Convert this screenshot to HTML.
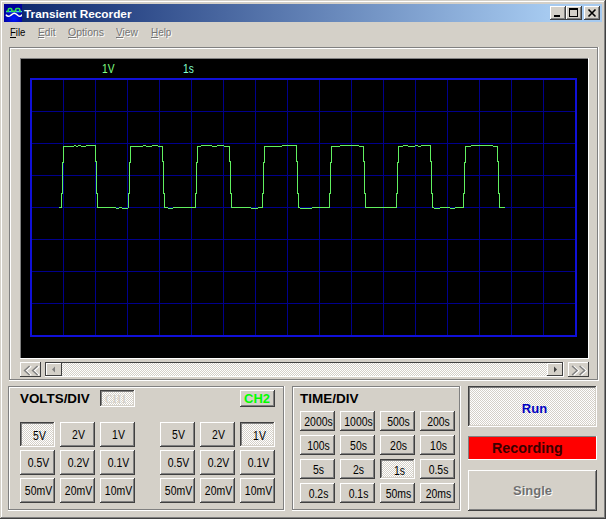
<!DOCTYPE html><html><head><meta charset="utf-8"><style>
html,body{margin:0;padding:0;}
body{width:606px;height:519px;position:relative;overflow:hidden;background:#d4d0c8;font-family:"Liberation Sans",sans-serif;}
</style></head><body>
<div style="position:absolute;left:0px;top:0px;width:606px;height:519px;box-shadow: inset -1px -1px #404040, inset 1px 1px #d4d0c8, inset -2px -2px #808080, inset 2px 2px #fff;background:#d4d0c8;"></div>
<div style="position:absolute;left:4px;top:4px;width:598px;height:18px;background:linear-gradient(to right,#0a246a 0%,#a6caf0 91%,#a6caf0 100%);"></div>
<svg style="position:absolute;left:4px;top:4px" width="18" height="18" viewBox="4 4 18 18">
<defs><radialGradient id="ib" cx="0.55" cy="0.8" r="0.6"><stop offset="0" stop-color="#0018ff"/><stop offset="1" stop-color="#000098"/></radialGradient></defs>
<rect x="4" y="4" width="18" height="18" fill="url(#ib)"/>
<path d="M6 11.6 H22" fill="none" stroke="#40c0ff" stroke-width="1.4"/>
<path d="M6.5 11.3 H8.3 V9.6 Q8.3 8.6 9.3 8.6 H10.8 Q11.8 8.6 11.8 9.6 V11.3 H15.7 V9.6 Q15.7 8.6 16.7 8.6 H18.7 Q19.7 8.6 19.7 9.6 V11.3 H21" fill="none" stroke="#30e050" stroke-width="1.5"/>
<path d="M6 14.6 C7 16.6 9 16.6 10.5 15.5 C12 14.4 13 13.2 14.2 13.2 C15.5 13.2 17 14.4 18 15.5 C19.2 16.6 21 16.6 22 14.5" fill="none" stroke="#fffff0" stroke-width="1.5"/>
</svg>
<div style="position:absolute;left:24px;top:5px;white-space:nowrap;font:bold 11.8px 'Liberation Sans',sans-serif;color:#fff;line-height:18px;">Transient Recorder</div>
<div style="position:absolute;left:550px;top:6px;width:16px;height:14px;box-shadow: inset -1px -1px #404040, inset 1px 1px #fff, inset -2px -2px #808080, inset 2px 2px #d4d0c8;background:#d4d0c8;"></div>
<div style="position:absolute;left:554px;top:15px;width:6px;height:2px;background:#000;"></div>
<div style="position:absolute;left:566px;top:6px;width:16px;height:14px;box-shadow: inset -1px -1px #404040, inset 1px 1px #fff, inset -2px -2px #808080, inset 2px 2px #d4d0c8;background:#d4d0c8;"></div>
<div style="position:absolute;left:569px;top:8px;width:9px;height:9px;box-shadow: inset 0 2px #000, inset 1px 0 #000, inset -1px -1px #000;"></div>
<div style="position:absolute;left:584px;top:6px;width:16px;height:14px;box-shadow: inset -1px -1px #404040, inset 1px 1px #fff, inset -2px -2px #808080, inset 2px 2px #d4d0c8;background:#d4d0c8;"></div>
<svg style="position:absolute;left:584px;top:6px" width="16" height="14"><path d="M4.5 3.5 L11.5 10.5 M11.5 3.5 L4.5 10.5" stroke="#000" stroke-width="1.6"/></svg>
<div style="position:absolute;left:10px;top:25px;white-space:nowrap;font:11px 'Liberation Sans',sans-serif;line-height:14px;transform-origin:0 0;color:#000;transform:scaleX(0.87);">File</div>
<div style="position:absolute;left:10px;top:37px;width:6px;height:1px;background:#000;"></div>
<div style="position:absolute;left:39px;top:26px;white-space:nowrap;font:11px 'Liberation Sans',sans-serif;line-height:14px;transform-origin:0 0;color:#fff;transform:scaleX(0.92);">Edit</div>
<div style="position:absolute;left:39px;top:38px;width:6px;height:1px;background:#fff;"></div>
<div style="position:absolute;left:38px;top:25px;white-space:nowrap;font:11px 'Liberation Sans',sans-serif;line-height:14px;transform-origin:0 0;color:#747474;transform:scaleX(0.92);">Edit</div>
<div style="position:absolute;left:38px;top:37px;width:6px;height:1px;background:#747474;"></div>
<div style="position:absolute;left:69px;top:26px;white-space:nowrap;font:11px 'Liberation Sans',sans-serif;line-height:14px;transform-origin:0 0;color:#fff;transform:scaleX(0.95);">Options</div>
<div style="position:absolute;left:69px;top:38px;width:8px;height:1px;background:#fff;"></div>
<div style="position:absolute;left:68px;top:25px;white-space:nowrap;font:11px 'Liberation Sans',sans-serif;line-height:14px;transform-origin:0 0;color:#747474;transform:scaleX(0.95);">Options</div>
<div style="position:absolute;left:68px;top:37px;width:8px;height:1px;background:#747474;"></div>
<div style="position:absolute;left:117px;top:26px;white-space:nowrap;font:11px 'Liberation Sans',sans-serif;line-height:14px;transform-origin:0 0;color:#fff;transform:scaleX(0.92);">View</div>
<div style="position:absolute;left:117px;top:38px;width:7px;height:1px;background:#fff;"></div>
<div style="position:absolute;left:116px;top:25px;white-space:nowrap;font:11px 'Liberation Sans',sans-serif;line-height:14px;transform-origin:0 0;color:#747474;transform:scaleX(0.92);">View</div>
<div style="position:absolute;left:116px;top:37px;width:7px;height:1px;background:#747474;"></div>
<div style="position:absolute;left:152px;top:26px;white-space:nowrap;font:11px 'Liberation Sans',sans-serif;line-height:14px;transform-origin:0 0;color:#fff;transform:scaleX(0.9);">Help</div>
<div style="position:absolute;left:152px;top:38px;width:7px;height:1px;background:#fff;"></div>
<div style="position:absolute;left:151px;top:25px;white-space:nowrap;font:11px 'Liberation Sans',sans-serif;line-height:14px;transform-origin:0 0;color:#747474;transform:scaleX(0.9);">Help</div>
<div style="position:absolute;left:151px;top:37px;width:7px;height:1px;background:#747474;"></div>
<div style="position:absolute;left:9px;top:47px;width:590px;height:334px;box-shadow: inset -1px -1px #fff, inset 1px 1px #808080, inset -2px -2px #808080, inset 2px 2px #fff;"></div>
<div style="position:absolute;left:20px;top:58px;width:569px;height:301px;box-shadow: inset -1px -1px #fff, inset 1px 1px #808080;background:#000;"></div>
<svg style="position:absolute;left:0;top:0" width="606" height="519" viewBox="0 0 606 519" shape-rendering="crispEdges"><rect x="63" y="80" width="1" height="255" fill="#00008c"/><rect x="95" y="80" width="1" height="255" fill="#00008c"/><rect x="127" y="80" width="1" height="255" fill="#00008c"/><rect x="159" y="80" width="1" height="255" fill="#00008c"/><rect x="191" y="80" width="1" height="255" fill="#00008c"/><rect x="223" y="80" width="1" height="255" fill="#00008c"/><rect x="255" y="80" width="1" height="255" fill="#00008c"/><rect x="287" y="80" width="1" height="255" fill="#00008c"/><rect x="319" y="80" width="1" height="255" fill="#00008c"/><rect x="351" y="80" width="1" height="255" fill="#00008c"/><rect x="383" y="80" width="1" height="255" fill="#00008c"/><rect x="415" y="80" width="1" height="255" fill="#00008c"/><rect x="447" y="80" width="1" height="255" fill="#00008c"/><rect x="479" y="80" width="1" height="255" fill="#00008c"/><rect x="511" y="80" width="1" height="255" fill="#00008c"/><rect x="543" y="80" width="1" height="255" fill="#00008c"/><rect x="32" y="111" width="543" height="1" fill="#00008c"/><rect x="32" y="143" width="543" height="1" fill="#00008c"/><rect x="32" y="175" width="543" height="1" fill="#00008c"/><rect x="32" y="207" width="543" height="1" fill="#00008c"/><rect x="32" y="239" width="543" height="1" fill="#00008c"/><rect x="32" y="271" width="543" height="1" fill="#00008c"/><rect x="32" y="303" width="543" height="1" fill="#00008c"/><rect x="30" y="78" width="547" height="2" fill="#1010d8"/><rect x="30" y="335" width="547" height="2" fill="#1010d8"/><rect x="30" y="78" width="2" height="259" fill="#1010d8"/><rect x="575" y="78" width="2" height="259" fill="#1010d8"/><rect x="63" y="158" width="1" height="1" fill="#60f060"/><rect x="95" y="158" width="1" height="1" fill="#60f060"/><rect x="130" y="158" width="1" height="1" fill="#60f060"/><rect x="162" y="158" width="1" height="1" fill="#60f060"/><rect x="197" y="158" width="1" height="1" fill="#60f060"/><rect x="229" y="158" width="1" height="1" fill="#60f060"/><rect x="264" y="158" width="1" height="1" fill="#60f060"/><rect x="296" y="158" width="1" height="1" fill="#60f060"/><rect x="331" y="158" width="1" height="1" fill="#60f060"/><rect x="363" y="158" width="1" height="1" fill="#60f060"/><rect x="398" y="158" width="1" height="1" fill="#60f060"/><rect x="430" y="158" width="1" height="1" fill="#60f060"/><rect x="465" y="158" width="1" height="1" fill="#60f060"/><rect x="497" y="158" width="1" height="1" fill="#60f060"/><rect x="63" y="157" width="1" height="1" fill="#60f060"/><rect x="95" y="157" width="1" height="1" fill="#60f060"/><rect x="130" y="157" width="1" height="1" fill="#60f060"/><rect x="162" y="157" width="1" height="1" fill="#60f060"/><rect x="197" y="157" width="1" height="1" fill="#60f060"/><rect x="229" y="157" width="1" height="1" fill="#60f060"/><rect x="264" y="157" width="1" height="1" fill="#60f060"/><rect x="296" y="157" width="1" height="1" fill="#60f060"/><rect x="331" y="157" width="1" height="1" fill="#60f060"/><rect x="363" y="157" width="1" height="1" fill="#60f060"/><rect x="398" y="157" width="1" height="1" fill="#60f060"/><rect x="430" y="157" width="1" height="1" fill="#60f060"/><rect x="465" y="157" width="1" height="1" fill="#60f060"/><rect x="497" y="157" width="1" height="1" fill="#60f060"/><rect x="63" y="147" width="1" height="1" fill="#60f060"/><rect x="95" y="147" width="1" height="1" fill="#60f060"/><rect x="130" y="147" width="1" height="1" fill="#60f060"/><rect x="162" y="147" width="1" height="1" fill="#60f060"/><rect x="197" y="147" width="1" height="1" fill="#60f060"/><rect x="229" y="147" width="1" height="1" fill="#60f060"/><rect x="264" y="147" width="1" height="1" fill="#60f060"/><rect x="296" y="147" width="1" height="1" fill="#60f060"/><rect x="331" y="147" width="1" height="1" fill="#60f060"/><rect x="363" y="147" width="1" height="1" fill="#60f060"/><rect x="398" y="147" width="1" height="1" fill="#60f060"/><rect x="430" y="147" width="1" height="1" fill="#60f060"/><rect x="465" y="147" width="1" height="1" fill="#60f060"/><rect x="497" y="147" width="1" height="1" fill="#60f060"/><rect x="59" y="207" width="3" height="1" fill="#60f060"/><rect x="97" y="207" width="19" height="1" fill="#60f060"/><rect x="119" y="207" width="3" height="1" fill="#60f060"/><rect x="128" y="207" width="1" height="1" fill="#60f060"/><rect x="164" y="207" width="4" height="1" fill="#60f060"/><rect x="173" y="207" width="23" height="1" fill="#60f060"/><rect x="231" y="207" width="20" height="1" fill="#60f060"/><rect x="258" y="207" width="5" height="1" fill="#60f060"/><rect x="298" y="207" width="2" height="1" fill="#60f060"/><rect x="312" y="207" width="18" height="1" fill="#60f060"/><rect x="365" y="207" width="32" height="1" fill="#60f060"/><rect x="432" y="207" width="2" height="1" fill="#60f060"/><rect x="440" y="207" width="10" height="1" fill="#60f060"/><rect x="455" y="207" width="9" height="1" fill="#60f060"/><rect x="499" y="207" width="6" height="1" fill="#60f060"/><rect x="74" y="145" width="2" height="1" fill="#60f060"/><rect x="78" y="145" width="3" height="1" fill="#60f060"/><rect x="86" y="145" width="10" height="1" fill="#60f060"/><rect x="143" y="145" width="3" height="1" fill="#60f060"/><rect x="152" y="145" width="6" height="1" fill="#60f060"/><rect x="201" y="145" width="11" height="1" fill="#60f060"/><rect x="217" y="145" width="7" height="1" fill="#60f060"/><rect x="282" y="145" width="15" height="1" fill="#60f060"/><rect x="340" y="145" width="19" height="1" fill="#60f060"/><rect x="403" y="145" width="5" height="1" fill="#60f060"/><rect x="415" y="145" width="3" height="1" fill="#60f060"/><rect x="421" y="145" width="10" height="1" fill="#60f060"/><rect x="471" y="145" width="22" height="1" fill="#60f060"/><rect x="62" y="191" width="1" height="1" fill="#60f060"/><rect x="96" y="191" width="1" height="1" fill="#60f060"/><rect x="129" y="191" width="1" height="1" fill="#60f060"/><rect x="163" y="191" width="1" height="1" fill="#60f060"/><rect x="196" y="191" width="1" height="1" fill="#60f060"/><rect x="230" y="191" width="1" height="1" fill="#60f060"/><rect x="263" y="191" width="1" height="1" fill="#60f060"/><rect x="297" y="191" width="1" height="1" fill="#60f060"/><rect x="330" y="191" width="1" height="1" fill="#60f060"/><rect x="364" y="191" width="1" height="1" fill="#60f060"/><rect x="397" y="191" width="1" height="1" fill="#60f060"/><rect x="431" y="191" width="1" height="1" fill="#60f060"/><rect x="464" y="191" width="1" height="1" fill="#60f060"/><rect x="498" y="191" width="1" height="1" fill="#60f060"/><rect x="61" y="202" width="1" height="1" fill="#60f060"/><rect x="97" y="202" width="1" height="1" fill="#60f060"/><rect x="128" y="202" width="1" height="1" fill="#60f060"/><rect x="164" y="202" width="1" height="1" fill="#60f060"/><rect x="195" y="202" width="1" height="1" fill="#60f060"/><rect x="231" y="202" width="1" height="1" fill="#60f060"/><rect x="262" y="202" width="1" height="1" fill="#60f060"/><rect x="298" y="202" width="1" height="1" fill="#60f060"/><rect x="329" y="202" width="1" height="1" fill="#60f060"/><rect x="365" y="202" width="1" height="1" fill="#60f060"/><rect x="396" y="202" width="1" height="1" fill="#60f060"/><rect x="432" y="202" width="1" height="1" fill="#60f060"/><rect x="463" y="202" width="1" height="1" fill="#60f060"/><rect x="499" y="202" width="1" height="1" fill="#60f060"/><rect x="62" y="181" width="1" height="1" fill="#60f060"/><rect x="96" y="181" width="1" height="1" fill="#60f060"/><rect x="129" y="181" width="1" height="1" fill="#60f060"/><rect x="163" y="181" width="1" height="1" fill="#60f060"/><rect x="196" y="181" width="1" height="1" fill="#60f060"/><rect x="230" y="181" width="1" height="1" fill="#60f060"/><rect x="263" y="181" width="1" height="1" fill="#60f060"/><rect x="297" y="181" width="1" height="1" fill="#60f060"/><rect x="330" y="181" width="1" height="1" fill="#60f060"/><rect x="364" y="181" width="1" height="1" fill="#60f060"/><rect x="397" y="181" width="1" height="1" fill="#60f060"/><rect x="431" y="181" width="1" height="1" fill="#60f060"/><rect x="464" y="181" width="1" height="1" fill="#60f060"/><rect x="498" y="181" width="1" height="1" fill="#60f060"/><rect x="62" y="171" width="1" height="1" fill="#60f060"/><rect x="96" y="171" width="1" height="1" fill="#60f060"/><rect x="129" y="171" width="1" height="1" fill="#60f060"/><rect x="163" y="171" width="1" height="1" fill="#60f060"/><rect x="196" y="171" width="1" height="1" fill="#60f060"/><rect x="230" y="171" width="1" height="1" fill="#60f060"/><rect x="263" y="171" width="1" height="1" fill="#60f060"/><rect x="297" y="171" width="1" height="1" fill="#60f060"/><rect x="330" y="171" width="1" height="1" fill="#60f060"/><rect x="364" y="171" width="1" height="1" fill="#60f060"/><rect x="397" y="171" width="1" height="1" fill="#60f060"/><rect x="431" y="171" width="1" height="1" fill="#60f060"/><rect x="464" y="171" width="1" height="1" fill="#60f060"/><rect x="498" y="171" width="1" height="1" fill="#60f060"/><rect x="116" y="208" width="3" height="1" fill="#60f060"/><rect x="122" y="208" width="6" height="1" fill="#60f060"/><rect x="168" y="208" width="5" height="1" fill="#60f060"/><rect x="251" y="208" width="7" height="1" fill="#60f060"/><rect x="300" y="208" width="12" height="1" fill="#60f060"/><rect x="434" y="208" width="6" height="1" fill="#60f060"/><rect x="450" y="208" width="5" height="1" fill="#60f060"/><rect x="62" y="179" width="1" height="1" fill="#60f060"/><rect x="96" y="179" width="1" height="1" fill="#60f060"/><rect x="129" y="179" width="1" height="1" fill="#60f060"/><rect x="163" y="179" width="1" height="1" fill="#60f060"/><rect x="196" y="179" width="1" height="1" fill="#60f060"/><rect x="230" y="179" width="1" height="1" fill="#60f060"/><rect x="263" y="179" width="1" height="1" fill="#60f060"/><rect x="297" y="179" width="1" height="1" fill="#60f060"/><rect x="330" y="179" width="1" height="1" fill="#60f060"/><rect x="364" y="179" width="1" height="1" fill="#60f060"/><rect x="397" y="179" width="1" height="1" fill="#60f060"/><rect x="431" y="179" width="1" height="1" fill="#60f060"/><rect x="464" y="179" width="1" height="1" fill="#60f060"/><rect x="498" y="179" width="1" height="1" fill="#60f060"/><rect x="63" y="146" width="11" height="1" fill="#60f060"/><rect x="76" y="146" width="2" height="1" fill="#60f060"/><rect x="81" y="146" width="5" height="1" fill="#60f060"/><rect x="95" y="146" width="1" height="1" fill="#60f060"/><rect x="130" y="146" width="13" height="1" fill="#60f060"/><rect x="146" y="146" width="6" height="1" fill="#60f060"/><rect x="158" y="146" width="5" height="1" fill="#60f060"/><rect x="197" y="146" width="4" height="1" fill="#60f060"/><rect x="212" y="146" width="5" height="1" fill="#60f060"/><rect x="224" y="146" width="6" height="1" fill="#60f060"/><rect x="264" y="146" width="18" height="1" fill="#60f060"/><rect x="296" y="146" width="1" height="1" fill="#60f060"/><rect x="331" y="146" width="9" height="1" fill="#60f060"/><rect x="359" y="146" width="5" height="1" fill="#60f060"/><rect x="398" y="146" width="5" height="1" fill="#60f060"/><rect x="408" y="146" width="7" height="1" fill="#60f060"/><rect x="418" y="146" width="3" height="1" fill="#60f060"/><rect x="430" y="146" width="1" height="1" fill="#60f060"/><rect x="465" y="146" width="6" height="1" fill="#60f060"/><rect x="493" y="146" width="5" height="1" fill="#60f060"/><rect x="62" y="168" width="1" height="1" fill="#60f060"/><rect x="96" y="168" width="1" height="1" fill="#60f060"/><rect x="129" y="168" width="1" height="1" fill="#60f060"/><rect x="163" y="168" width="1" height="1" fill="#60f060"/><rect x="196" y="168" width="1" height="1" fill="#60f060"/><rect x="230" y="168" width="1" height="1" fill="#60f060"/><rect x="263" y="168" width="1" height="1" fill="#60f060"/><rect x="297" y="168" width="1" height="1" fill="#60f060"/><rect x="330" y="168" width="1" height="1" fill="#60f060"/><rect x="364" y="168" width="1" height="1" fill="#60f060"/><rect x="397" y="168" width="1" height="1" fill="#60f060"/><rect x="431" y="168" width="1" height="1" fill="#60f060"/><rect x="464" y="168" width="1" height="1" fill="#60f060"/><rect x="498" y="168" width="1" height="1" fill="#60f060"/><rect x="63" y="150" width="1" height="1" fill="#60f060"/><rect x="95" y="150" width="1" height="1" fill="#60f060"/><rect x="130" y="150" width="1" height="1" fill="#60f060"/><rect x="162" y="150" width="1" height="1" fill="#60f060"/><rect x="197" y="150" width="1" height="1" fill="#60f060"/><rect x="229" y="150" width="1" height="1" fill="#60f060"/><rect x="264" y="150" width="1" height="1" fill="#60f060"/><rect x="296" y="150" width="1" height="1" fill="#60f060"/><rect x="331" y="150" width="1" height="1" fill="#60f060"/><rect x="363" y="150" width="1" height="1" fill="#60f060"/><rect x="398" y="150" width="1" height="1" fill="#60f060"/><rect x="430" y="150" width="1" height="1" fill="#60f060"/><rect x="465" y="150" width="1" height="1" fill="#60f060"/><rect x="497" y="150" width="1" height="1" fill="#60f060"/><rect x="61" y="205" width="1" height="1" fill="#60f060"/><rect x="97" y="205" width="1" height="1" fill="#60f060"/><rect x="128" y="205" width="1" height="1" fill="#60f060"/><rect x="164" y="205" width="1" height="1" fill="#60f060"/><rect x="195" y="205" width="1" height="1" fill="#60f060"/><rect x="231" y="205" width="1" height="1" fill="#60f060"/><rect x="262" y="205" width="1" height="1" fill="#60f060"/><rect x="298" y="205" width="1" height="1" fill="#60f060"/><rect x="329" y="205" width="1" height="1" fill="#60f060"/><rect x="365" y="205" width="1" height="1" fill="#60f060"/><rect x="396" y="205" width="1" height="1" fill="#60f060"/><rect x="432" y="205" width="1" height="1" fill="#60f060"/><rect x="463" y="205" width="1" height="1" fill="#60f060"/><rect x="499" y="205" width="1" height="1" fill="#60f060"/><rect x="61" y="195" width="1" height="1" fill="#60f060"/><rect x="97" y="195" width="1" height="1" fill="#60f060"/><rect x="128" y="195" width="1" height="1" fill="#60f060"/><rect x="164" y="195" width="1" height="1" fill="#60f060"/><rect x="195" y="195" width="1" height="1" fill="#60f060"/><rect x="231" y="195" width="1" height="1" fill="#60f060"/><rect x="262" y="195" width="1" height="1" fill="#60f060"/><rect x="298" y="195" width="1" height="1" fill="#60f060"/><rect x="329" y="195" width="1" height="1" fill="#60f060"/><rect x="365" y="195" width="1" height="1" fill="#60f060"/><rect x="396" y="195" width="1" height="1" fill="#60f060"/><rect x="432" y="195" width="1" height="1" fill="#60f060"/><rect x="463" y="195" width="1" height="1" fill="#60f060"/><rect x="499" y="195" width="1" height="1" fill="#60f060"/><rect x="63" y="159" width="1" height="1" fill="#60f060"/><rect x="95" y="159" width="1" height="1" fill="#60f060"/><rect x="130" y="159" width="1" height="1" fill="#60f060"/><rect x="162" y="159" width="1" height="1" fill="#60f060"/><rect x="197" y="159" width="1" height="1" fill="#60f060"/><rect x="229" y="159" width="1" height="1" fill="#60f060"/><rect x="264" y="159" width="1" height="1" fill="#60f060"/><rect x="296" y="159" width="1" height="1" fill="#60f060"/><rect x="331" y="159" width="1" height="1" fill="#60f060"/><rect x="363" y="159" width="1" height="1" fill="#60f060"/><rect x="398" y="159" width="1" height="1" fill="#60f060"/><rect x="430" y="159" width="1" height="1" fill="#60f060"/><rect x="465" y="159" width="1" height="1" fill="#60f060"/><rect x="497" y="159" width="1" height="1" fill="#60f060"/><rect x="62" y="184" width="1" height="1" fill="#60f060"/><rect x="96" y="184" width="1" height="1" fill="#60f060"/><rect x="129" y="184" width="1" height="1" fill="#60f060"/><rect x="163" y="184" width="1" height="1" fill="#60f060"/><rect x="196" y="184" width="1" height="1" fill="#60f060"/><rect x="230" y="184" width="1" height="1" fill="#60f060"/><rect x="263" y="184" width="1" height="1" fill="#60f060"/><rect x="297" y="184" width="1" height="1" fill="#60f060"/><rect x="330" y="184" width="1" height="1" fill="#60f060"/><rect x="364" y="184" width="1" height="1" fill="#60f060"/><rect x="397" y="184" width="1" height="1" fill="#60f060"/><rect x="431" y="184" width="1" height="1" fill="#60f060"/><rect x="464" y="184" width="1" height="1" fill="#60f060"/><rect x="498" y="184" width="1" height="1" fill="#60f060"/><rect x="61" y="198" width="1" height="1" fill="#60f060"/><rect x="97" y="198" width="1" height="1" fill="#60f060"/><rect x="128" y="198" width="1" height="1" fill="#60f060"/><rect x="164" y="198" width="1" height="1" fill="#60f060"/><rect x="195" y="198" width="1" height="1" fill="#60f060"/><rect x="231" y="198" width="1" height="1" fill="#60f060"/><rect x="262" y="198" width="1" height="1" fill="#60f060"/><rect x="298" y="198" width="1" height="1" fill="#60f060"/><rect x="329" y="198" width="1" height="1" fill="#60f060"/><rect x="365" y="198" width="1" height="1" fill="#60f060"/><rect x="396" y="198" width="1" height="1" fill="#60f060"/><rect x="432" y="198" width="1" height="1" fill="#60f060"/><rect x="463" y="198" width="1" height="1" fill="#60f060"/><rect x="499" y="198" width="1" height="1" fill="#60f060"/><rect x="63" y="148" width="1" height="1" fill="#60f060"/><rect x="95" y="148" width="1" height="1" fill="#60f060"/><rect x="130" y="148" width="1" height="1" fill="#60f060"/><rect x="162" y="148" width="1" height="1" fill="#60f060"/><rect x="197" y="148" width="1" height="1" fill="#60f060"/><rect x="229" y="148" width="1" height="1" fill="#60f060"/><rect x="264" y="148" width="1" height="1" fill="#60f060"/><rect x="296" y="148" width="1" height="1" fill="#60f060"/><rect x="331" y="148" width="1" height="1" fill="#60f060"/><rect x="363" y="148" width="1" height="1" fill="#60f060"/><rect x="398" y="148" width="1" height="1" fill="#60f060"/><rect x="430" y="148" width="1" height="1" fill="#60f060"/><rect x="465" y="148" width="1" height="1" fill="#60f060"/><rect x="497" y="148" width="1" height="1" fill="#60f060"/><rect x="62" y="192" width="1" height="1" fill="#60f060"/><rect x="96" y="192" width="1" height="1" fill="#60f060"/><rect x="129" y="192" width="1" height="1" fill="#60f060"/><rect x="163" y="192" width="1" height="1" fill="#60f060"/><rect x="196" y="192" width="1" height="1" fill="#60f060"/><rect x="230" y="192" width="1" height="1" fill="#60f060"/><rect x="263" y="192" width="1" height="1" fill="#60f060"/><rect x="297" y="192" width="1" height="1" fill="#60f060"/><rect x="330" y="192" width="1" height="1" fill="#60f060"/><rect x="364" y="192" width="1" height="1" fill="#60f060"/><rect x="397" y="192" width="1" height="1" fill="#60f060"/><rect x="431" y="192" width="1" height="1" fill="#60f060"/><rect x="464" y="192" width="1" height="1" fill="#60f060"/><rect x="498" y="192" width="1" height="1" fill="#60f060"/><rect x="62" y="169" width="1" height="1" fill="#60f060"/><rect x="96" y="169" width="1" height="1" fill="#60f060"/><rect x="129" y="169" width="1" height="1" fill="#60f060"/><rect x="163" y="169" width="1" height="1" fill="#60f060"/><rect x="196" y="169" width="1" height="1" fill="#60f060"/><rect x="230" y="169" width="1" height="1" fill="#60f060"/><rect x="263" y="169" width="1" height="1" fill="#60f060"/><rect x="297" y="169" width="1" height="1" fill="#60f060"/><rect x="330" y="169" width="1" height="1" fill="#60f060"/><rect x="364" y="169" width="1" height="1" fill="#60f060"/><rect x="397" y="169" width="1" height="1" fill="#60f060"/><rect x="431" y="169" width="1" height="1" fill="#60f060"/><rect x="464" y="169" width="1" height="1" fill="#60f060"/><rect x="498" y="169" width="1" height="1" fill="#60f060"/><rect x="62" y="176" width="1" height="1" fill="#60f060"/><rect x="96" y="176" width="1" height="1" fill="#60f060"/><rect x="129" y="176" width="1" height="1" fill="#60f060"/><rect x="163" y="176" width="1" height="1" fill="#60f060"/><rect x="196" y="176" width="1" height="1" fill="#60f060"/><rect x="230" y="176" width="1" height="1" fill="#60f060"/><rect x="263" y="176" width="1" height="1" fill="#60f060"/><rect x="297" y="176" width="1" height="1" fill="#60f060"/><rect x="330" y="176" width="1" height="1" fill="#60f060"/><rect x="364" y="176" width="1" height="1" fill="#60f060"/><rect x="397" y="176" width="1" height="1" fill="#60f060"/><rect x="431" y="176" width="1" height="1" fill="#60f060"/><rect x="464" y="176" width="1" height="1" fill="#60f060"/><rect x="498" y="176" width="1" height="1" fill="#60f060"/><rect x="61" y="201" width="1" height="1" fill="#60f060"/><rect x="97" y="201" width="1" height="1" fill="#60f060"/><rect x="128" y="201" width="1" height="1" fill="#60f060"/><rect x="164" y="201" width="1" height="1" fill="#60f060"/><rect x="195" y="201" width="1" height="1" fill="#60f060"/><rect x="231" y="201" width="1" height="1" fill="#60f060"/><rect x="262" y="201" width="1" height="1" fill="#60f060"/><rect x="298" y="201" width="1" height="1" fill="#60f060"/><rect x="329" y="201" width="1" height="1" fill="#60f060"/><rect x="365" y="201" width="1" height="1" fill="#60f060"/><rect x="396" y="201" width="1" height="1" fill="#60f060"/><rect x="432" y="201" width="1" height="1" fill="#60f060"/><rect x="463" y="201" width="1" height="1" fill="#60f060"/><rect x="499" y="201" width="1" height="1" fill="#60f060"/><rect x="63" y="155" width="1" height="1" fill="#60f060"/><rect x="95" y="155" width="1" height="1" fill="#60f060"/><rect x="130" y="155" width="1" height="1" fill="#60f060"/><rect x="162" y="155" width="1" height="1" fill="#60f060"/><rect x="197" y="155" width="1" height="1" fill="#60f060"/><rect x="229" y="155" width="1" height="1" fill="#60f060"/><rect x="264" y="155" width="1" height="1" fill="#60f060"/><rect x="296" y="155" width="1" height="1" fill="#60f060"/><rect x="331" y="155" width="1" height="1" fill="#60f060"/><rect x="363" y="155" width="1" height="1" fill="#60f060"/><rect x="398" y="155" width="1" height="1" fill="#60f060"/><rect x="430" y="155" width="1" height="1" fill="#60f060"/><rect x="465" y="155" width="1" height="1" fill="#60f060"/><rect x="497" y="155" width="1" height="1" fill="#60f060"/><rect x="63" y="149" width="1" height="1" fill="#60f060"/><rect x="95" y="149" width="1" height="1" fill="#60f060"/><rect x="130" y="149" width="1" height="1" fill="#60f060"/><rect x="162" y="149" width="1" height="1" fill="#60f060"/><rect x="197" y="149" width="1" height="1" fill="#60f060"/><rect x="229" y="149" width="1" height="1" fill="#60f060"/><rect x="264" y="149" width="1" height="1" fill="#60f060"/><rect x="296" y="149" width="1" height="1" fill="#60f060"/><rect x="331" y="149" width="1" height="1" fill="#60f060"/><rect x="363" y="149" width="1" height="1" fill="#60f060"/><rect x="398" y="149" width="1" height="1" fill="#60f060"/><rect x="430" y="149" width="1" height="1" fill="#60f060"/><rect x="465" y="149" width="1" height="1" fill="#60f060"/><rect x="497" y="149" width="1" height="1" fill="#60f060"/><rect x="62" y="174" width="1" height="1" fill="#60f060"/><rect x="96" y="174" width="1" height="1" fill="#60f060"/><rect x="129" y="174" width="1" height="1" fill="#60f060"/><rect x="163" y="174" width="1" height="1" fill="#60f060"/><rect x="196" y="174" width="1" height="1" fill="#60f060"/><rect x="230" y="174" width="1" height="1" fill="#60f060"/><rect x="263" y="174" width="1" height="1" fill="#60f060"/><rect x="297" y="174" width="1" height="1" fill="#60f060"/><rect x="330" y="174" width="1" height="1" fill="#60f060"/><rect x="364" y="174" width="1" height="1" fill="#60f060"/><rect x="397" y="174" width="1" height="1" fill="#60f060"/><rect x="431" y="174" width="1" height="1" fill="#60f060"/><rect x="464" y="174" width="1" height="1" fill="#60f060"/><rect x="498" y="174" width="1" height="1" fill="#60f060"/><rect x="61" y="200" width="1" height="1" fill="#60f060"/><rect x="97" y="200" width="1" height="1" fill="#60f060"/><rect x="128" y="200" width="1" height="1" fill="#60f060"/><rect x="164" y="200" width="1" height="1" fill="#60f060"/><rect x="195" y="200" width="1" height="1" fill="#60f060"/><rect x="231" y="200" width="1" height="1" fill="#60f060"/><rect x="262" y="200" width="1" height="1" fill="#60f060"/><rect x="298" y="200" width="1" height="1" fill="#60f060"/><rect x="329" y="200" width="1" height="1" fill="#60f060"/><rect x="365" y="200" width="1" height="1" fill="#60f060"/><rect x="396" y="200" width="1" height="1" fill="#60f060"/><rect x="432" y="200" width="1" height="1" fill="#60f060"/><rect x="463" y="200" width="1" height="1" fill="#60f060"/><rect x="499" y="200" width="1" height="1" fill="#60f060"/><rect x="62" y="189" width="1" height="1" fill="#60f060"/><rect x="96" y="189" width="1" height="1" fill="#60f060"/><rect x="129" y="189" width="1" height="1" fill="#60f060"/><rect x="163" y="189" width="1" height="1" fill="#60f060"/><rect x="196" y="189" width="1" height="1" fill="#60f060"/><rect x="230" y="189" width="1" height="1" fill="#60f060"/><rect x="263" y="189" width="1" height="1" fill="#60f060"/><rect x="297" y="189" width="1" height="1" fill="#60f060"/><rect x="330" y="189" width="1" height="1" fill="#60f060"/><rect x="364" y="189" width="1" height="1" fill="#60f060"/><rect x="397" y="189" width="1" height="1" fill="#60f060"/><rect x="431" y="189" width="1" height="1" fill="#60f060"/><rect x="464" y="189" width="1" height="1" fill="#60f060"/><rect x="498" y="189" width="1" height="1" fill="#60f060"/><rect x="62" y="187" width="1" height="1" fill="#60f060"/><rect x="96" y="187" width="1" height="1" fill="#60f060"/><rect x="129" y="187" width="1" height="1" fill="#60f060"/><rect x="163" y="187" width="1" height="1" fill="#60f060"/><rect x="196" y="187" width="1" height="1" fill="#60f060"/><rect x="230" y="187" width="1" height="1" fill="#60f060"/><rect x="263" y="187" width="1" height="1" fill="#60f060"/><rect x="297" y="187" width="1" height="1" fill="#60f060"/><rect x="330" y="187" width="1" height="1" fill="#60f060"/><rect x="364" y="187" width="1" height="1" fill="#60f060"/><rect x="397" y="187" width="1" height="1" fill="#60f060"/><rect x="431" y="187" width="1" height="1" fill="#60f060"/><rect x="464" y="187" width="1" height="1" fill="#60f060"/><rect x="498" y="187" width="1" height="1" fill="#60f060"/><rect x="62" y="166" width="1" height="1" fill="#60f060"/><rect x="96" y="166" width="1" height="1" fill="#60f060"/><rect x="129" y="166" width="1" height="1" fill="#60f060"/><rect x="163" y="166" width="1" height="1" fill="#60f060"/><rect x="196" y="166" width="1" height="1" fill="#60f060"/><rect x="230" y="166" width="1" height="1" fill="#60f060"/><rect x="263" y="166" width="1" height="1" fill="#60f060"/><rect x="297" y="166" width="1" height="1" fill="#60f060"/><rect x="330" y="166" width="1" height="1" fill="#60f060"/><rect x="364" y="166" width="1" height="1" fill="#60f060"/><rect x="397" y="166" width="1" height="1" fill="#60f060"/><rect x="431" y="166" width="1" height="1" fill="#60f060"/><rect x="464" y="166" width="1" height="1" fill="#60f060"/><rect x="498" y="166" width="1" height="1" fill="#60f060"/><rect x="61" y="203" width="1" height="1" fill="#60f060"/><rect x="97" y="203" width="1" height="1" fill="#60f060"/><rect x="128" y="203" width="1" height="1" fill="#60f060"/><rect x="164" y="203" width="1" height="1" fill="#60f060"/><rect x="195" y="203" width="1" height="1" fill="#60f060"/><rect x="231" y="203" width="1" height="1" fill="#60f060"/><rect x="262" y="203" width="1" height="1" fill="#60f060"/><rect x="298" y="203" width="1" height="1" fill="#60f060"/><rect x="329" y="203" width="1" height="1" fill="#60f060"/><rect x="365" y="203" width="1" height="1" fill="#60f060"/><rect x="396" y="203" width="1" height="1" fill="#60f060"/><rect x="432" y="203" width="1" height="1" fill="#60f060"/><rect x="463" y="203" width="1" height="1" fill="#60f060"/><rect x="499" y="203" width="1" height="1" fill="#60f060"/><rect x="62" y="182" width="1" height="1" fill="#60f060"/><rect x="96" y="182" width="1" height="1" fill="#60f060"/><rect x="129" y="182" width="1" height="1" fill="#60f060"/><rect x="163" y="182" width="1" height="1" fill="#60f060"/><rect x="196" y="182" width="1" height="1" fill="#60f060"/><rect x="230" y="182" width="1" height="1" fill="#60f060"/><rect x="263" y="182" width="1" height="1" fill="#60f060"/><rect x="297" y="182" width="1" height="1" fill="#60f060"/><rect x="330" y="182" width="1" height="1" fill="#60f060"/><rect x="364" y="182" width="1" height="1" fill="#60f060"/><rect x="397" y="182" width="1" height="1" fill="#60f060"/><rect x="431" y="182" width="1" height="1" fill="#60f060"/><rect x="464" y="182" width="1" height="1" fill="#60f060"/><rect x="498" y="182" width="1" height="1" fill="#60f060"/><rect x="63" y="156" width="1" height="1" fill="#60f060"/><rect x="95" y="156" width="1" height="1" fill="#60f060"/><rect x="130" y="156" width="1" height="1" fill="#60f060"/><rect x="162" y="156" width="1" height="1" fill="#60f060"/><rect x="197" y="156" width="1" height="1" fill="#60f060"/><rect x="229" y="156" width="1" height="1" fill="#60f060"/><rect x="264" y="156" width="1" height="1" fill="#60f060"/><rect x="296" y="156" width="1" height="1" fill="#60f060"/><rect x="331" y="156" width="1" height="1" fill="#60f060"/><rect x="363" y="156" width="1" height="1" fill="#60f060"/><rect x="398" y="156" width="1" height="1" fill="#60f060"/><rect x="430" y="156" width="1" height="1" fill="#60f060"/><rect x="465" y="156" width="1" height="1" fill="#60f060"/><rect x="497" y="156" width="1" height="1" fill="#60f060"/><rect x="62" y="190" width="1" height="1" fill="#60f060"/><rect x="96" y="190" width="1" height="1" fill="#60f060"/><rect x="129" y="190" width="1" height="1" fill="#60f060"/><rect x="163" y="190" width="1" height="1" fill="#60f060"/><rect x="196" y="190" width="1" height="1" fill="#60f060"/><rect x="230" y="190" width="1" height="1" fill="#60f060"/><rect x="263" y="190" width="1" height="1" fill="#60f060"/><rect x="297" y="190" width="1" height="1" fill="#60f060"/><rect x="330" y="190" width="1" height="1" fill="#60f060"/><rect x="364" y="190" width="1" height="1" fill="#60f060"/><rect x="397" y="190" width="1" height="1" fill="#60f060"/><rect x="431" y="190" width="1" height="1" fill="#60f060"/><rect x="464" y="190" width="1" height="1" fill="#60f060"/><rect x="498" y="190" width="1" height="1" fill="#60f060"/><rect x="63" y="161" width="1" height="1" fill="#60f060"/><rect x="95" y="161" width="2" height="1" fill="#60f060"/><rect x="130" y="161" width="1" height="1" fill="#60f060"/><rect x="162" y="161" width="2" height="1" fill="#60f060"/><rect x="197" y="161" width="1" height="1" fill="#60f060"/><rect x="229" y="161" width="2" height="1" fill="#60f060"/><rect x="264" y="161" width="1" height="1" fill="#60f060"/><rect x="296" y="161" width="2" height="1" fill="#60f060"/><rect x="331" y="161" width="1" height="1" fill="#60f060"/><rect x="363" y="161" width="2" height="1" fill="#60f060"/><rect x="398" y="161" width="1" height="1" fill="#60f060"/><rect x="430" y="161" width="2" height="1" fill="#60f060"/><rect x="465" y="161" width="1" height="1" fill="#60f060"/><rect x="497" y="161" width="2" height="1" fill="#60f060"/><rect x="61" y="204" width="1" height="1" fill="#60f060"/><rect x="97" y="204" width="1" height="1" fill="#60f060"/><rect x="128" y="204" width="1" height="1" fill="#60f060"/><rect x="164" y="204" width="1" height="1" fill="#60f060"/><rect x="195" y="204" width="1" height="1" fill="#60f060"/><rect x="231" y="204" width="1" height="1" fill="#60f060"/><rect x="262" y="204" width="1" height="1" fill="#60f060"/><rect x="298" y="204" width="1" height="1" fill="#60f060"/><rect x="329" y="204" width="1" height="1" fill="#60f060"/><rect x="365" y="204" width="1" height="1" fill="#60f060"/><rect x="396" y="204" width="1" height="1" fill="#60f060"/><rect x="432" y="204" width="1" height="1" fill="#60f060"/><rect x="463" y="204" width="1" height="1" fill="#60f060"/><rect x="499" y="204" width="1" height="1" fill="#60f060"/><rect x="62" y="177" width="1" height="1" fill="#60f060"/><rect x="96" y="177" width="1" height="1" fill="#60f060"/><rect x="129" y="177" width="1" height="1" fill="#60f060"/><rect x="163" y="177" width="1" height="1" fill="#60f060"/><rect x="196" y="177" width="1" height="1" fill="#60f060"/><rect x="230" y="177" width="1" height="1" fill="#60f060"/><rect x="263" y="177" width="1" height="1" fill="#60f060"/><rect x="297" y="177" width="1" height="1" fill="#60f060"/><rect x="330" y="177" width="1" height="1" fill="#60f060"/><rect x="364" y="177" width="1" height="1" fill="#60f060"/><rect x="397" y="177" width="1" height="1" fill="#60f060"/><rect x="431" y="177" width="1" height="1" fill="#60f060"/><rect x="464" y="177" width="1" height="1" fill="#60f060"/><rect x="498" y="177" width="1" height="1" fill="#60f060"/><rect x="62" y="167" width="1" height="1" fill="#60f060"/><rect x="96" y="167" width="1" height="1" fill="#60f060"/><rect x="129" y="167" width="1" height="1" fill="#60f060"/><rect x="163" y="167" width="1" height="1" fill="#60f060"/><rect x="196" y="167" width="1" height="1" fill="#60f060"/><rect x="230" y="167" width="1" height="1" fill="#60f060"/><rect x="263" y="167" width="1" height="1" fill="#60f060"/><rect x="297" y="167" width="1" height="1" fill="#60f060"/><rect x="330" y="167" width="1" height="1" fill="#60f060"/><rect x="364" y="167" width="1" height="1" fill="#60f060"/><rect x="397" y="167" width="1" height="1" fill="#60f060"/><rect x="431" y="167" width="1" height="1" fill="#60f060"/><rect x="464" y="167" width="1" height="1" fill="#60f060"/><rect x="498" y="167" width="1" height="1" fill="#60f060"/><rect x="61" y="193" width="2" height="1" fill="#60f060"/><rect x="96" y="193" width="2" height="1" fill="#60f060"/><rect x="128" y="193" width="2" height="1" fill="#60f060"/><rect x="163" y="193" width="2" height="1" fill="#60f060"/><rect x="195" y="193" width="2" height="1" fill="#60f060"/><rect x="230" y="193" width="2" height="1" fill="#60f060"/><rect x="262" y="193" width="2" height="1" fill="#60f060"/><rect x="297" y="193" width="2" height="1" fill="#60f060"/><rect x="329" y="193" width="2" height="1" fill="#60f060"/><rect x="364" y="193" width="2" height="1" fill="#60f060"/><rect x="396" y="193" width="2" height="1" fill="#60f060"/><rect x="431" y="193" width="2" height="1" fill="#60f060"/><rect x="463" y="193" width="2" height="1" fill="#60f060"/><rect x="498" y="193" width="2" height="1" fill="#60f060"/><rect x="62" y="172" width="1" height="1" fill="#60f060"/><rect x="96" y="172" width="1" height="1" fill="#60f060"/><rect x="129" y="172" width="1" height="1" fill="#60f060"/><rect x="163" y="172" width="1" height="1" fill="#60f060"/><rect x="196" y="172" width="1" height="1" fill="#60f060"/><rect x="230" y="172" width="1" height="1" fill="#60f060"/><rect x="263" y="172" width="1" height="1" fill="#60f060"/><rect x="297" y="172" width="1" height="1" fill="#60f060"/><rect x="330" y="172" width="1" height="1" fill="#60f060"/><rect x="364" y="172" width="1" height="1" fill="#60f060"/><rect x="397" y="172" width="1" height="1" fill="#60f060"/><rect x="431" y="172" width="1" height="1" fill="#60f060"/><rect x="464" y="172" width="1" height="1" fill="#60f060"/><rect x="498" y="172" width="1" height="1" fill="#60f060"/><rect x="62" y="180" width="1" height="1" fill="#60f060"/><rect x="96" y="180" width="1" height="1" fill="#60f060"/><rect x="129" y="180" width="1" height="1" fill="#60f060"/><rect x="163" y="180" width="1" height="1" fill="#60f060"/><rect x="196" y="180" width="1" height="1" fill="#60f060"/><rect x="230" y="180" width="1" height="1" fill="#60f060"/><rect x="263" y="180" width="1" height="1" fill="#60f060"/><rect x="297" y="180" width="1" height="1" fill="#60f060"/><rect x="330" y="180" width="1" height="1" fill="#60f060"/><rect x="364" y="180" width="1" height="1" fill="#60f060"/><rect x="397" y="180" width="1" height="1" fill="#60f060"/><rect x="431" y="180" width="1" height="1" fill="#60f060"/><rect x="464" y="180" width="1" height="1" fill="#60f060"/><rect x="498" y="180" width="1" height="1" fill="#60f060"/><rect x="63" y="151" width="1" height="1" fill="#60f060"/><rect x="95" y="151" width="1" height="1" fill="#60f060"/><rect x="130" y="151" width="1" height="1" fill="#60f060"/><rect x="162" y="151" width="1" height="1" fill="#60f060"/><rect x="197" y="151" width="1" height="1" fill="#60f060"/><rect x="229" y="151" width="1" height="1" fill="#60f060"/><rect x="264" y="151" width="1" height="1" fill="#60f060"/><rect x="296" y="151" width="1" height="1" fill="#60f060"/><rect x="331" y="151" width="1" height="1" fill="#60f060"/><rect x="363" y="151" width="1" height="1" fill="#60f060"/><rect x="398" y="151" width="1" height="1" fill="#60f060"/><rect x="430" y="151" width="1" height="1" fill="#60f060"/><rect x="465" y="151" width="1" height="1" fill="#60f060"/><rect x="497" y="151" width="1" height="1" fill="#60f060"/><rect x="61" y="194" width="1" height="1" fill="#60f060"/><rect x="97" y="194" width="1" height="1" fill="#60f060"/><rect x="128" y="194" width="1" height="1" fill="#60f060"/><rect x="164" y="194" width="1" height="1" fill="#60f060"/><rect x="195" y="194" width="1" height="1" fill="#60f060"/><rect x="231" y="194" width="1" height="1" fill="#60f060"/><rect x="262" y="194" width="1" height="1" fill="#60f060"/><rect x="298" y="194" width="1" height="1" fill="#60f060"/><rect x="329" y="194" width="1" height="1" fill="#60f060"/><rect x="365" y="194" width="1" height="1" fill="#60f060"/><rect x="396" y="194" width="1" height="1" fill="#60f060"/><rect x="432" y="194" width="1" height="1" fill="#60f060"/><rect x="463" y="194" width="1" height="1" fill="#60f060"/><rect x="499" y="194" width="1" height="1" fill="#60f060"/><rect x="63" y="160" width="1" height="1" fill="#60f060"/><rect x="95" y="160" width="1" height="1" fill="#60f060"/><rect x="130" y="160" width="1" height="1" fill="#60f060"/><rect x="162" y="160" width="1" height="1" fill="#60f060"/><rect x="197" y="160" width="1" height="1" fill="#60f060"/><rect x="229" y="160" width="1" height="1" fill="#60f060"/><rect x="264" y="160" width="1" height="1" fill="#60f060"/><rect x="296" y="160" width="1" height="1" fill="#60f060"/><rect x="331" y="160" width="1" height="1" fill="#60f060"/><rect x="363" y="160" width="1" height="1" fill="#60f060"/><rect x="398" y="160" width="1" height="1" fill="#60f060"/><rect x="430" y="160" width="1" height="1" fill="#60f060"/><rect x="465" y="160" width="1" height="1" fill="#60f060"/><rect x="497" y="160" width="1" height="1" fill="#60f060"/><rect x="61" y="199" width="1" height="1" fill="#60f060"/><rect x="97" y="199" width="1" height="1" fill="#60f060"/><rect x="128" y="199" width="1" height="1" fill="#60f060"/><rect x="164" y="199" width="1" height="1" fill="#60f060"/><rect x="195" y="199" width="1" height="1" fill="#60f060"/><rect x="231" y="199" width="1" height="1" fill="#60f060"/><rect x="262" y="199" width="1" height="1" fill="#60f060"/><rect x="298" y="199" width="1" height="1" fill="#60f060"/><rect x="329" y="199" width="1" height="1" fill="#60f060"/><rect x="365" y="199" width="1" height="1" fill="#60f060"/><rect x="396" y="199" width="1" height="1" fill="#60f060"/><rect x="432" y="199" width="1" height="1" fill="#60f060"/><rect x="463" y="199" width="1" height="1" fill="#60f060"/><rect x="499" y="199" width="1" height="1" fill="#60f060"/><rect x="62" y="162" width="2" height="1" fill="#60f060"/><rect x="96" y="162" width="1" height="1" fill="#60f060"/><rect x="129" y="162" width="2" height="1" fill="#60f060"/><rect x="163" y="162" width="1" height="1" fill="#60f060"/><rect x="196" y="162" width="2" height="1" fill="#60f060"/><rect x="230" y="162" width="1" height="1" fill="#60f060"/><rect x="263" y="162" width="2" height="1" fill="#60f060"/><rect x="297" y="162" width="1" height="1" fill="#60f060"/><rect x="330" y="162" width="2" height="1" fill="#60f060"/><rect x="364" y="162" width="1" height="1" fill="#60f060"/><rect x="397" y="162" width="2" height="1" fill="#60f060"/><rect x="431" y="162" width="1" height="1" fill="#60f060"/><rect x="464" y="162" width="2" height="1" fill="#60f060"/><rect x="498" y="162" width="1" height="1" fill="#60f060"/><rect x="62" y="170" width="1" height="1" fill="#60f060"/><rect x="96" y="170" width="1" height="1" fill="#60f060"/><rect x="129" y="170" width="1" height="1" fill="#60f060"/><rect x="163" y="170" width="1" height="1" fill="#60f060"/><rect x="196" y="170" width="1" height="1" fill="#60f060"/><rect x="230" y="170" width="1" height="1" fill="#60f060"/><rect x="263" y="170" width="1" height="1" fill="#60f060"/><rect x="297" y="170" width="1" height="1" fill="#60f060"/><rect x="330" y="170" width="1" height="1" fill="#60f060"/><rect x="364" y="170" width="1" height="1" fill="#60f060"/><rect x="397" y="170" width="1" height="1" fill="#60f060"/><rect x="431" y="170" width="1" height="1" fill="#60f060"/><rect x="464" y="170" width="1" height="1" fill="#60f060"/><rect x="498" y="170" width="1" height="1" fill="#60f060"/><rect x="62" y="183" width="1" height="1" fill="#60f060"/><rect x="96" y="183" width="1" height="1" fill="#60f060"/><rect x="129" y="183" width="1" height="1" fill="#60f060"/><rect x="163" y="183" width="1" height="1" fill="#60f060"/><rect x="196" y="183" width="1" height="1" fill="#60f060"/><rect x="230" y="183" width="1" height="1" fill="#60f060"/><rect x="263" y="183" width="1" height="1" fill="#60f060"/><rect x="297" y="183" width="1" height="1" fill="#60f060"/><rect x="330" y="183" width="1" height="1" fill="#60f060"/><rect x="364" y="183" width="1" height="1" fill="#60f060"/><rect x="397" y="183" width="1" height="1" fill="#60f060"/><rect x="431" y="183" width="1" height="1" fill="#60f060"/><rect x="464" y="183" width="1" height="1" fill="#60f060"/><rect x="498" y="183" width="1" height="1" fill="#60f060"/><rect x="62" y="173" width="1" height="1" fill="#60f060"/><rect x="96" y="173" width="1" height="1" fill="#60f060"/><rect x="129" y="173" width="1" height="1" fill="#60f060"/><rect x="163" y="173" width="1" height="1" fill="#60f060"/><rect x="196" y="173" width="1" height="1" fill="#60f060"/><rect x="230" y="173" width="1" height="1" fill="#60f060"/><rect x="263" y="173" width="1" height="1" fill="#60f060"/><rect x="297" y="173" width="1" height="1" fill="#60f060"/><rect x="330" y="173" width="1" height="1" fill="#60f060"/><rect x="364" y="173" width="1" height="1" fill="#60f060"/><rect x="397" y="173" width="1" height="1" fill="#60f060"/><rect x="431" y="173" width="1" height="1" fill="#60f060"/><rect x="464" y="173" width="1" height="1" fill="#60f060"/><rect x="498" y="173" width="1" height="1" fill="#60f060"/><rect x="62" y="188" width="1" height="1" fill="#60f060"/><rect x="96" y="188" width="1" height="1" fill="#60f060"/><rect x="129" y="188" width="1" height="1" fill="#60f060"/><rect x="163" y="188" width="1" height="1" fill="#60f060"/><rect x="196" y="188" width="1" height="1" fill="#60f060"/><rect x="230" y="188" width="1" height="1" fill="#60f060"/><rect x="263" y="188" width="1" height="1" fill="#60f060"/><rect x="297" y="188" width="1" height="1" fill="#60f060"/><rect x="330" y="188" width="1" height="1" fill="#60f060"/><rect x="364" y="188" width="1" height="1" fill="#60f060"/><rect x="397" y="188" width="1" height="1" fill="#60f060"/><rect x="431" y="188" width="1" height="1" fill="#60f060"/><rect x="464" y="188" width="1" height="1" fill="#60f060"/><rect x="498" y="188" width="1" height="1" fill="#60f060"/><rect x="63" y="152" width="1" height="1" fill="#60f060"/><rect x="95" y="152" width="1" height="1" fill="#60f060"/><rect x="130" y="152" width="1" height="1" fill="#60f060"/><rect x="162" y="152" width="1" height="1" fill="#60f060"/><rect x="197" y="152" width="1" height="1" fill="#60f060"/><rect x="229" y="152" width="1" height="1" fill="#60f060"/><rect x="264" y="152" width="1" height="1" fill="#60f060"/><rect x="296" y="152" width="1" height="1" fill="#60f060"/><rect x="331" y="152" width="1" height="1" fill="#60f060"/><rect x="363" y="152" width="1" height="1" fill="#60f060"/><rect x="398" y="152" width="1" height="1" fill="#60f060"/><rect x="430" y="152" width="1" height="1" fill="#60f060"/><rect x="465" y="152" width="1" height="1" fill="#60f060"/><rect x="497" y="152" width="1" height="1" fill="#60f060"/><rect x="61" y="197" width="1" height="1" fill="#60f060"/><rect x="97" y="197" width="1" height="1" fill="#60f060"/><rect x="128" y="197" width="1" height="1" fill="#60f060"/><rect x="164" y="197" width="1" height="1" fill="#60f060"/><rect x="195" y="197" width="1" height="1" fill="#60f060"/><rect x="231" y="197" width="1" height="1" fill="#60f060"/><rect x="262" y="197" width="1" height="1" fill="#60f060"/><rect x="298" y="197" width="1" height="1" fill="#60f060"/><rect x="329" y="197" width="1" height="1" fill="#60f060"/><rect x="365" y="197" width="1" height="1" fill="#60f060"/><rect x="396" y="197" width="1" height="1" fill="#60f060"/><rect x="432" y="197" width="1" height="1" fill="#60f060"/><rect x="463" y="197" width="1" height="1" fill="#60f060"/><rect x="499" y="197" width="1" height="1" fill="#60f060"/><rect x="62" y="186" width="1" height="1" fill="#60f060"/><rect x="96" y="186" width="1" height="1" fill="#60f060"/><rect x="129" y="186" width="1" height="1" fill="#60f060"/><rect x="163" y="186" width="1" height="1" fill="#60f060"/><rect x="196" y="186" width="1" height="1" fill="#60f060"/><rect x="230" y="186" width="1" height="1" fill="#60f060"/><rect x="263" y="186" width="1" height="1" fill="#60f060"/><rect x="297" y="186" width="1" height="1" fill="#60f060"/><rect x="330" y="186" width="1" height="1" fill="#60f060"/><rect x="364" y="186" width="1" height="1" fill="#60f060"/><rect x="397" y="186" width="1" height="1" fill="#60f060"/><rect x="431" y="186" width="1" height="1" fill="#60f060"/><rect x="464" y="186" width="1" height="1" fill="#60f060"/><rect x="498" y="186" width="1" height="1" fill="#60f060"/><rect x="62" y="163" width="1" height="1" fill="#60f060"/><rect x="96" y="163" width="1" height="1" fill="#60f060"/><rect x="129" y="163" width="1" height="1" fill="#60f060"/><rect x="163" y="163" width="1" height="1" fill="#60f060"/><rect x="196" y="163" width="1" height="1" fill="#60f060"/><rect x="230" y="163" width="1" height="1" fill="#60f060"/><rect x="263" y="163" width="1" height="1" fill="#60f060"/><rect x="297" y="163" width="1" height="1" fill="#60f060"/><rect x="330" y="163" width="1" height="1" fill="#60f060"/><rect x="364" y="163" width="1" height="1" fill="#60f060"/><rect x="397" y="163" width="1" height="1" fill="#60f060"/><rect x="431" y="163" width="1" height="1" fill="#60f060"/><rect x="464" y="163" width="1" height="1" fill="#60f060"/><rect x="498" y="163" width="1" height="1" fill="#60f060"/><rect x="62" y="178" width="1" height="1" fill="#60f060"/><rect x="96" y="178" width="1" height="1" fill="#60f060"/><rect x="129" y="178" width="1" height="1" fill="#60f060"/><rect x="163" y="178" width="1" height="1" fill="#60f060"/><rect x="196" y="178" width="1" height="1" fill="#60f060"/><rect x="230" y="178" width="1" height="1" fill="#60f060"/><rect x="263" y="178" width="1" height="1" fill="#60f060"/><rect x="297" y="178" width="1" height="1" fill="#60f060"/><rect x="330" y="178" width="1" height="1" fill="#60f060"/><rect x="364" y="178" width="1" height="1" fill="#60f060"/><rect x="397" y="178" width="1" height="1" fill="#60f060"/><rect x="431" y="178" width="1" height="1" fill="#60f060"/><rect x="464" y="178" width="1" height="1" fill="#60f060"/><rect x="498" y="178" width="1" height="1" fill="#60f060"/><rect x="61" y="206" width="1" height="1" fill="#60f060"/><rect x="97" y="206" width="1" height="1" fill="#60f060"/><rect x="128" y="206" width="1" height="1" fill="#60f060"/><rect x="164" y="206" width="1" height="1" fill="#60f060"/><rect x="195" y="206" width="1" height="1" fill="#60f060"/><rect x="231" y="206" width="1" height="1" fill="#60f060"/><rect x="262" y="206" width="1" height="1" fill="#60f060"/><rect x="298" y="206" width="1" height="1" fill="#60f060"/><rect x="329" y="206" width="1" height="1" fill="#60f060"/><rect x="365" y="206" width="1" height="1" fill="#60f060"/><rect x="396" y="206" width="1" height="1" fill="#60f060"/><rect x="432" y="206" width="1" height="1" fill="#60f060"/><rect x="463" y="206" width="1" height="1" fill="#60f060"/><rect x="499" y="206" width="1" height="1" fill="#60f060"/><rect x="63" y="153" width="1" height="1" fill="#60f060"/><rect x="95" y="153" width="1" height="1" fill="#60f060"/><rect x="130" y="153" width="1" height="1" fill="#60f060"/><rect x="162" y="153" width="1" height="1" fill="#60f060"/><rect x="197" y="153" width="1" height="1" fill="#60f060"/><rect x="229" y="153" width="1" height="1" fill="#60f060"/><rect x="264" y="153" width="1" height="1" fill="#60f060"/><rect x="296" y="153" width="1" height="1" fill="#60f060"/><rect x="331" y="153" width="1" height="1" fill="#60f060"/><rect x="363" y="153" width="1" height="1" fill="#60f060"/><rect x="398" y="153" width="1" height="1" fill="#60f060"/><rect x="430" y="153" width="1" height="1" fill="#60f060"/><rect x="465" y="153" width="1" height="1" fill="#60f060"/><rect x="497" y="153" width="1" height="1" fill="#60f060"/><rect x="62" y="164" width="1" height="1" fill="#60f060"/><rect x="96" y="164" width="1" height="1" fill="#60f060"/><rect x="129" y="164" width="1" height="1" fill="#60f060"/><rect x="163" y="164" width="1" height="1" fill="#60f060"/><rect x="196" y="164" width="1" height="1" fill="#60f060"/><rect x="230" y="164" width="1" height="1" fill="#60f060"/><rect x="263" y="164" width="1" height="1" fill="#60f060"/><rect x="297" y="164" width="1" height="1" fill="#60f060"/><rect x="330" y="164" width="1" height="1" fill="#60f060"/><rect x="364" y="164" width="1" height="1" fill="#60f060"/><rect x="397" y="164" width="1" height="1" fill="#60f060"/><rect x="431" y="164" width="1" height="1" fill="#60f060"/><rect x="464" y="164" width="1" height="1" fill="#60f060"/><rect x="498" y="164" width="1" height="1" fill="#60f060"/><rect x="61" y="196" width="1" height="1" fill="#60f060"/><rect x="97" y="196" width="1" height="1" fill="#60f060"/><rect x="128" y="196" width="1" height="1" fill="#60f060"/><rect x="164" y="196" width="1" height="1" fill="#60f060"/><rect x="195" y="196" width="1" height="1" fill="#60f060"/><rect x="231" y="196" width="1" height="1" fill="#60f060"/><rect x="262" y="196" width="1" height="1" fill="#60f060"/><rect x="298" y="196" width="1" height="1" fill="#60f060"/><rect x="329" y="196" width="1" height="1" fill="#60f060"/><rect x="365" y="196" width="1" height="1" fill="#60f060"/><rect x="396" y="196" width="1" height="1" fill="#60f060"/><rect x="432" y="196" width="1" height="1" fill="#60f060"/><rect x="463" y="196" width="1" height="1" fill="#60f060"/><rect x="499" y="196" width="1" height="1" fill="#60f060"/><rect x="62" y="185" width="1" height="1" fill="#60f060"/><rect x="96" y="185" width="1" height="1" fill="#60f060"/><rect x="129" y="185" width="1" height="1" fill="#60f060"/><rect x="163" y="185" width="1" height="1" fill="#60f060"/><rect x="196" y="185" width="1" height="1" fill="#60f060"/><rect x="230" y="185" width="1" height="1" fill="#60f060"/><rect x="263" y="185" width="1" height="1" fill="#60f060"/><rect x="297" y="185" width="1" height="1" fill="#60f060"/><rect x="330" y="185" width="1" height="1" fill="#60f060"/><rect x="364" y="185" width="1" height="1" fill="#60f060"/><rect x="397" y="185" width="1" height="1" fill="#60f060"/><rect x="431" y="185" width="1" height="1" fill="#60f060"/><rect x="464" y="185" width="1" height="1" fill="#60f060"/><rect x="498" y="185" width="1" height="1" fill="#60f060"/><rect x="62" y="175" width="1" height="1" fill="#60f060"/><rect x="96" y="175" width="1" height="1" fill="#60f060"/><rect x="129" y="175" width="1" height="1" fill="#60f060"/><rect x="163" y="175" width="1" height="1" fill="#60f060"/><rect x="196" y="175" width="1" height="1" fill="#60f060"/><rect x="230" y="175" width="1" height="1" fill="#60f060"/><rect x="263" y="175" width="1" height="1" fill="#60f060"/><rect x="297" y="175" width="1" height="1" fill="#60f060"/><rect x="330" y="175" width="1" height="1" fill="#60f060"/><rect x="364" y="175" width="1" height="1" fill="#60f060"/><rect x="397" y="175" width="1" height="1" fill="#60f060"/><rect x="431" y="175" width="1" height="1" fill="#60f060"/><rect x="464" y="175" width="1" height="1" fill="#60f060"/><rect x="498" y="175" width="1" height="1" fill="#60f060"/><rect x="63" y="154" width="1" height="1" fill="#60f060"/><rect x="95" y="154" width="1" height="1" fill="#60f060"/><rect x="130" y="154" width="1" height="1" fill="#60f060"/><rect x="162" y="154" width="1" height="1" fill="#60f060"/><rect x="197" y="154" width="1" height="1" fill="#60f060"/><rect x="229" y="154" width="1" height="1" fill="#60f060"/><rect x="264" y="154" width="1" height="1" fill="#60f060"/><rect x="296" y="154" width="1" height="1" fill="#60f060"/><rect x="331" y="154" width="1" height="1" fill="#60f060"/><rect x="363" y="154" width="1" height="1" fill="#60f060"/><rect x="398" y="154" width="1" height="1" fill="#60f060"/><rect x="430" y="154" width="1" height="1" fill="#60f060"/><rect x="465" y="154" width="1" height="1" fill="#60f060"/><rect x="497" y="154" width="1" height="1" fill="#60f060"/><rect x="62" y="165" width="1" height="1" fill="#60f060"/><rect x="96" y="165" width="1" height="1" fill="#60f060"/><rect x="129" y="165" width="1" height="1" fill="#60f060"/><rect x="163" y="165" width="1" height="1" fill="#60f060"/><rect x="196" y="165" width="1" height="1" fill="#60f060"/><rect x="230" y="165" width="1" height="1" fill="#60f060"/><rect x="263" y="165" width="1" height="1" fill="#60f060"/><rect x="297" y="165" width="1" height="1" fill="#60f060"/><rect x="330" y="165" width="1" height="1" fill="#60f060"/><rect x="364" y="165" width="1" height="1" fill="#60f060"/><rect x="397" y="165" width="1" height="1" fill="#60f060"/><rect x="431" y="165" width="1" height="1" fill="#60f060"/><rect x="464" y="165" width="1" height="1" fill="#60f060"/><rect x="498" y="165" width="1" height="1" fill="#60f060"/></svg>
<div style="position:absolute;left:102px;top:62px;white-space:nowrap;font:12px 'Liberation Sans',sans-serif;color:#80ff80;line-height:14px;transform:scaleX(0.85);transform-origin:0 0;">1V</div>
<div style="position:absolute;left:183px;top:62px;white-space:nowrap;font:12px 'Liberation Sans',sans-serif;color:#80ffd0;line-height:14px;transform:scaleX(0.85);transform-origin:0 0;">1s</div>
<div style="position:absolute;left:20px;top:362px;width:21px;height:15px;box-shadow: inset -1px -1px #404040, inset 1px 1px #fff;background:#d4d0c8;"></div>
<svg style="position:absolute;left:20px;top:362px" width="21" height="15"><path d="M9.6 4 L4.6 8.5 L9.6 13 M17.6 4 L12.6 8.5 L17.6 13" fill="none" stroke="#fff" stroke-width="1.4" transform="translate(1.6,0.3)"/><path d="M9.6 4 L4.6 8.5 L9.6 13 M17.6 4 L12.6 8.5 L17.6 13" fill="none" stroke="#808080" stroke-width="1.5"/></svg>
<div style="position:absolute;left:568px;top:362px;width:21px;height:15px;box-shadow: inset -1px -1px #404040, inset 1px 1px #fff;background:#d4d0c8;"></div>
<svg style="position:absolute;left:568px;top:362px" width="21" height="15"><path d="M4.1 4 L9.1 8.5 L4.1 13 M11.6 4 L16.6 8.5 L11.6 13" fill="none" stroke="#fff" stroke-width="1.4" transform="translate(1.6,0.3)"/><path d="M4.1 4 L9.1 8.5 L4.1 13 M11.6 4 L16.6 8.5 L11.6 13" fill="none" stroke="#808080" stroke-width="1.5"/></svg>
<div style="position:absolute;left:45px;top:362px;width:519px;height:15px;box-shadow: inset -1px -1px #fff, inset 1px 1px #404040;background-color:#d4d0c8;background-image:repeating-conic-gradient(#fff 0% 25%, #d4d0c8 0% 50%);background-size:2px 2px;"></div>
<div style="position:absolute;left:46px;top:363px;width:16px;height:13px;box-shadow: inset -1px -1px #404040, inset 1px 1px #fff;background:#d4d0c8;"></div>
<svg style="position:absolute;left:46px;top:363px" width="16" height="13"><path d="M6 6.5 L9 3.5 L9 9.5 Z" fill="#808080"/></svg>
<div style="position:absolute;left:547px;top:363px;width:16px;height:13px;box-shadow: inset -1px -1px #404040, inset 1px 1px #fff;background:#d4d0c8;"></div>
<svg style="position:absolute;left:547px;top:363px" width="16" height="13"><path d="M10 6.5 L7 3.5 L7 9.5 Z" fill="#404040"/></svg>
<div style="position:absolute;left:8px;top:386px;width:277px;height:125px;box-shadow: inset -1px -1px #fff, inset 1px 1px #808080, inset -2px -2px #808080, inset 2px 2px #fff;"></div>
<div style="position:absolute;left:20px;top:391px;white-space:nowrap;font:bold 13.4px 'Liberation Sans',sans-serif;color:#000;line-height:16px;">VOLTS/DIV</div>
<div style="position:absolute;left:100px;top:390px;width:35px;height:17px;box-shadow: inset -1px -1px #fff, inset 1px 1px #404040, inset -2px -2px #d4d0c8, inset 2px 2px #808080;background-color:#d4d0c8;background-image:repeating-conic-gradient(#fff 0% 25%, #d4d0c8 0% 50%);background-size:2px 2px;"></div>
<div style="position:absolute;left:106px;top:391px;white-space:nowrap;font:bold 13.5px 'Liberation Serif',serif;color:#fff;line-height:16px;opacity:0.5;transform:scaleX(0.8);transform-origin:0 0;">CH1</div>
<div style="position:absolute;left:105px;top:391px;white-space:nowrap;font:bold 13.5px 'Liberation Serif',serif;color:#d4d0c8;line-height:16px;transform:scaleX(0.8);transform-origin:0 0;">CH1</div>
<div style="position:absolute;left:240px;top:390px;width:35px;height:17px;box-shadow: inset -1px -1px #404040, inset 1px 1px #fff, inset -2px -2px #808080, inset 2px 2px #d4d0c8;background:#d4d0c8;"></div>
<div style="position:absolute;left:244px;top:391px;white-space:nowrap;font:bold 13px 'Liberation Sans',sans-serif;color:#00ff00;line-height:16px;">CH2</div>
<div style="position:absolute;left:20px;top:422px;width:35px;height:25px;box-shadow: inset -1px -1px #fff, inset 1px 1px #404040, inset -2px -2px #d4d0c8, inset 2px 2px #808080;background-color:#d4d0c8;background-image:repeating-conic-gradient(#fff 0% 25%, #d4d0c8 0% 50%);background-size:2px 2px;"><div style="position:absolute;left:2px;top:2px;width:35px;height:25px;text-align:center;font:12px/25px 'Liberation Sans',sans-serif;color:#000;transform:scaleX(0.87);">5V</div></div>
<div style="position:absolute;left:160px;top:422px;width:35px;height:25px;box-shadow: inset -1px -1px #404040, inset 1px 1px #fff, inset -2px -2px #808080, inset 2px 2px #d4d0c8;background:#d4d0c8;"><div style="position:absolute;left:1px;top:1px;width:35px;height:25px;text-align:center;font:12px/25px 'Liberation Sans',sans-serif;color:#000;transform:scaleX(0.87);">5V</div></div>
<div style="position:absolute;left:60px;top:422px;width:35px;height:25px;box-shadow: inset -1px -1px #404040, inset 1px 1px #fff, inset -2px -2px #808080, inset 2px 2px #d4d0c8;background:#d4d0c8;"><div style="position:absolute;left:1px;top:1px;width:35px;height:25px;text-align:center;font:12px/25px 'Liberation Sans',sans-serif;color:#000;transform:scaleX(0.87);">2V</div></div>
<div style="position:absolute;left:200px;top:422px;width:35px;height:25px;box-shadow: inset -1px -1px #404040, inset 1px 1px #fff, inset -2px -2px #808080, inset 2px 2px #d4d0c8;background:#d4d0c8;"><div style="position:absolute;left:1px;top:1px;width:35px;height:25px;text-align:center;font:12px/25px 'Liberation Sans',sans-serif;color:#000;transform:scaleX(0.87);">2V</div></div>
<div style="position:absolute;left:100px;top:422px;width:35px;height:25px;box-shadow: inset -1px -1px #404040, inset 1px 1px #fff, inset -2px -2px #808080, inset 2px 2px #d4d0c8;background:#d4d0c8;"><div style="position:absolute;left:1px;top:1px;width:35px;height:25px;text-align:center;font:12px/25px 'Liberation Sans',sans-serif;color:#000;transform:scaleX(0.87);">1V</div></div>
<div style="position:absolute;left:240px;top:422px;width:35px;height:25px;box-shadow: inset -1px -1px #fff, inset 1px 1px #404040, inset -2px -2px #d4d0c8, inset 2px 2px #808080;background-color:#d4d0c8;background-image:repeating-conic-gradient(#fff 0% 25%, #d4d0c8 0% 50%);background-size:2px 2px;"><div style="position:absolute;left:2px;top:2px;width:35px;height:25px;text-align:center;font:12px/25px 'Liberation Sans',sans-serif;color:#000;transform:scaleX(0.87);">1V</div></div>
<div style="position:absolute;left:20px;top:450px;width:35px;height:25px;box-shadow: inset -1px -1px #404040, inset 1px 1px #fff, inset -2px -2px #808080, inset 2px 2px #d4d0c8;background:#d4d0c8;"><div style="position:absolute;left:1px;top:1px;width:35px;height:25px;text-align:center;font:12px/25px 'Liberation Sans',sans-serif;color:#000;transform:scaleX(0.87);">0.5V</div></div>
<div style="position:absolute;left:160px;top:450px;width:35px;height:25px;box-shadow: inset -1px -1px #404040, inset 1px 1px #fff, inset -2px -2px #808080, inset 2px 2px #d4d0c8;background:#d4d0c8;"><div style="position:absolute;left:1px;top:1px;width:35px;height:25px;text-align:center;font:12px/25px 'Liberation Sans',sans-serif;color:#000;transform:scaleX(0.87);">0.5V</div></div>
<div style="position:absolute;left:60px;top:450px;width:35px;height:25px;box-shadow: inset -1px -1px #404040, inset 1px 1px #fff, inset -2px -2px #808080, inset 2px 2px #d4d0c8;background:#d4d0c8;"><div style="position:absolute;left:1px;top:1px;width:35px;height:25px;text-align:center;font:12px/25px 'Liberation Sans',sans-serif;color:#000;transform:scaleX(0.87);">0.2V</div></div>
<div style="position:absolute;left:200px;top:450px;width:35px;height:25px;box-shadow: inset -1px -1px #404040, inset 1px 1px #fff, inset -2px -2px #808080, inset 2px 2px #d4d0c8;background:#d4d0c8;"><div style="position:absolute;left:1px;top:1px;width:35px;height:25px;text-align:center;font:12px/25px 'Liberation Sans',sans-serif;color:#000;transform:scaleX(0.87);">0.2V</div></div>
<div style="position:absolute;left:100px;top:450px;width:35px;height:25px;box-shadow: inset -1px -1px #404040, inset 1px 1px #fff, inset -2px -2px #808080, inset 2px 2px #d4d0c8;background:#d4d0c8;"><div style="position:absolute;left:1px;top:1px;width:35px;height:25px;text-align:center;font:12px/25px 'Liberation Sans',sans-serif;color:#000;transform:scaleX(0.87);">0.1V</div></div>
<div style="position:absolute;left:240px;top:450px;width:35px;height:25px;box-shadow: inset -1px -1px #404040, inset 1px 1px #fff, inset -2px -2px #808080, inset 2px 2px #d4d0c8;background:#d4d0c8;"><div style="position:absolute;left:1px;top:1px;width:35px;height:25px;text-align:center;font:12px/25px 'Liberation Sans',sans-serif;color:#000;transform:scaleX(0.87);">0.1V</div></div>
<div style="position:absolute;left:20px;top:478px;width:35px;height:25px;box-shadow: inset -1px -1px #404040, inset 1px 1px #fff, inset -2px -2px #808080, inset 2px 2px #d4d0c8;background:#d4d0c8;"><div style="position:absolute;left:1px;top:1px;width:35px;height:25px;text-align:center;font:12px/25px 'Liberation Sans',sans-serif;color:#000;transform:scaleX(0.87);">50mV</div></div>
<div style="position:absolute;left:160px;top:478px;width:35px;height:25px;box-shadow: inset -1px -1px #404040, inset 1px 1px #fff, inset -2px -2px #808080, inset 2px 2px #d4d0c8;background:#d4d0c8;"><div style="position:absolute;left:1px;top:1px;width:35px;height:25px;text-align:center;font:12px/25px 'Liberation Sans',sans-serif;color:#000;transform:scaleX(0.87);">50mV</div></div>
<div style="position:absolute;left:60px;top:478px;width:35px;height:25px;box-shadow: inset -1px -1px #404040, inset 1px 1px #fff, inset -2px -2px #808080, inset 2px 2px #d4d0c8;background:#d4d0c8;"><div style="position:absolute;left:1px;top:1px;width:35px;height:25px;text-align:center;font:12px/25px 'Liberation Sans',sans-serif;color:#000;transform:scaleX(0.87);">20mV</div></div>
<div style="position:absolute;left:200px;top:478px;width:35px;height:25px;box-shadow: inset -1px -1px #404040, inset 1px 1px #fff, inset -2px -2px #808080, inset 2px 2px #d4d0c8;background:#d4d0c8;"><div style="position:absolute;left:1px;top:1px;width:35px;height:25px;text-align:center;font:12px/25px 'Liberation Sans',sans-serif;color:#000;transform:scaleX(0.87);">20mV</div></div>
<div style="position:absolute;left:100px;top:478px;width:35px;height:25px;box-shadow: inset -1px -1px #404040, inset 1px 1px #fff, inset -2px -2px #808080, inset 2px 2px #d4d0c8;background:#d4d0c8;"><div style="position:absolute;left:1px;top:1px;width:35px;height:25px;text-align:center;font:12px/25px 'Liberation Sans',sans-serif;color:#000;transform:scaleX(0.87);">10mV</div></div>
<div style="position:absolute;left:240px;top:478px;width:35px;height:25px;box-shadow: inset -1px -1px #404040, inset 1px 1px #fff, inset -2px -2px #808080, inset 2px 2px #d4d0c8;background:#d4d0c8;"><div style="position:absolute;left:1px;top:1px;width:35px;height:25px;text-align:center;font:12px/25px 'Liberation Sans',sans-serif;color:#000;transform:scaleX(0.87);">10mV</div></div>
<div style="position:absolute;left:292px;top:386px;width:169px;height:125px;box-shadow: inset -1px -1px #fff, inset 1px 1px #808080, inset -2px -2px #808080, inset 2px 2px #fff;"></div>
<div style="position:absolute;left:300px;top:391px;white-space:nowrap;font:bold 13.5px 'Liberation Sans',sans-serif;color:#000;line-height:16px;">TIME/DIV</div>
<div style="position:absolute;left:300px;top:411px;width:35px;height:20px;box-shadow: inset -1px -1px #404040, inset 1px 1px #fff, inset -2px -2px #808080, inset 2px 2px #d4d0c8;background:#d4d0c8;"><div style="position:absolute;left:1px;top:1px;width:35px;height:20px;text-align:center;font:12px/20px 'Liberation Sans',sans-serif;color:#000;transform:scaleX(0.87);">2000s</div></div>
<div style="position:absolute;left:340px;top:411px;width:35px;height:20px;box-shadow: inset -1px -1px #404040, inset 1px 1px #fff, inset -2px -2px #808080, inset 2px 2px #d4d0c8;background:#d4d0c8;"><div style="position:absolute;left:1px;top:1px;width:35px;height:20px;text-align:center;font:12px/20px 'Liberation Sans',sans-serif;color:#000;transform:scaleX(0.87);">1000s</div></div>
<div style="position:absolute;left:380px;top:411px;width:35px;height:20px;box-shadow: inset -1px -1px #404040, inset 1px 1px #fff, inset -2px -2px #808080, inset 2px 2px #d4d0c8;background:#d4d0c8;"><div style="position:absolute;left:1px;top:1px;width:35px;height:20px;text-align:center;font:12px/20px 'Liberation Sans',sans-serif;color:#000;transform:scaleX(0.87);">500s</div></div>
<div style="position:absolute;left:420px;top:411px;width:35px;height:20px;box-shadow: inset -1px -1px #404040, inset 1px 1px #fff, inset -2px -2px #808080, inset 2px 2px #d4d0c8;background:#d4d0c8;"><div style="position:absolute;left:1px;top:1px;width:35px;height:20px;text-align:center;font:12px/20px 'Liberation Sans',sans-serif;color:#000;transform:scaleX(0.87);">200s</div></div>
<div style="position:absolute;left:300px;top:435px;width:35px;height:20px;box-shadow: inset -1px -1px #404040, inset 1px 1px #fff, inset -2px -2px #808080, inset 2px 2px #d4d0c8;background:#d4d0c8;"><div style="position:absolute;left:1px;top:1px;width:35px;height:20px;text-align:center;font:12px/20px 'Liberation Sans',sans-serif;color:#000;transform:scaleX(0.87);">100s</div></div>
<div style="position:absolute;left:340px;top:435px;width:35px;height:20px;box-shadow: inset -1px -1px #404040, inset 1px 1px #fff, inset -2px -2px #808080, inset 2px 2px #d4d0c8;background:#d4d0c8;"><div style="position:absolute;left:1px;top:1px;width:35px;height:20px;text-align:center;font:12px/20px 'Liberation Sans',sans-serif;color:#000;transform:scaleX(0.87);">50s</div></div>
<div style="position:absolute;left:380px;top:435px;width:35px;height:20px;box-shadow: inset -1px -1px #404040, inset 1px 1px #fff, inset -2px -2px #808080, inset 2px 2px #d4d0c8;background:#d4d0c8;"><div style="position:absolute;left:1px;top:1px;width:35px;height:20px;text-align:center;font:12px/20px 'Liberation Sans',sans-serif;color:#000;transform:scaleX(0.87);">20s</div></div>
<div style="position:absolute;left:420px;top:435px;width:35px;height:20px;box-shadow: inset -1px -1px #404040, inset 1px 1px #fff, inset -2px -2px #808080, inset 2px 2px #d4d0c8;background:#d4d0c8;"><div style="position:absolute;left:1px;top:1px;width:35px;height:20px;text-align:center;font:12px/20px 'Liberation Sans',sans-serif;color:#000;transform:scaleX(0.87);">10s</div></div>
<div style="position:absolute;left:300px;top:459px;width:35px;height:20px;box-shadow: inset -1px -1px #404040, inset 1px 1px #fff, inset -2px -2px #808080, inset 2px 2px #d4d0c8;background:#d4d0c8;"><div style="position:absolute;left:1px;top:1px;width:35px;height:20px;text-align:center;font:12px/20px 'Liberation Sans',sans-serif;color:#000;transform:scaleX(0.87);">5s</div></div>
<div style="position:absolute;left:340px;top:459px;width:35px;height:20px;box-shadow: inset -1px -1px #404040, inset 1px 1px #fff, inset -2px -2px #808080, inset 2px 2px #d4d0c8;background:#d4d0c8;"><div style="position:absolute;left:1px;top:1px;width:35px;height:20px;text-align:center;font:12px/20px 'Liberation Sans',sans-serif;color:#000;transform:scaleX(0.87);">2s</div></div>
<div style="position:absolute;left:380px;top:459px;width:35px;height:20px;box-shadow: inset -1px -1px #fff, inset 1px 1px #404040, inset -2px -2px #d4d0c8, inset 2px 2px #808080;background-color:#d4d0c8;background-image:repeating-conic-gradient(#fff 0% 25%, #d4d0c8 0% 50%);background-size:2px 2px;"><div style="position:absolute;left:2px;top:2px;width:35px;height:20px;text-align:center;font:12px/20px 'Liberation Sans',sans-serif;color:#000;transform:scaleX(0.87);">1s</div></div>
<div style="position:absolute;left:420px;top:459px;width:35px;height:20px;box-shadow: inset -1px -1px #404040, inset 1px 1px #fff, inset -2px -2px #808080, inset 2px 2px #d4d0c8;background:#d4d0c8;"><div style="position:absolute;left:1px;top:1px;width:35px;height:20px;text-align:center;font:12px/20px 'Liberation Sans',sans-serif;color:#000;transform:scaleX(0.87);">0.5s</div></div>
<div style="position:absolute;left:300px;top:483px;width:35px;height:20px;box-shadow: inset -1px -1px #404040, inset 1px 1px #fff, inset -2px -2px #808080, inset 2px 2px #d4d0c8;background:#d4d0c8;"><div style="position:absolute;left:1px;top:1px;width:35px;height:20px;text-align:center;font:12px/20px 'Liberation Sans',sans-serif;color:#000;transform:scaleX(0.87);">0.2s</div></div>
<div style="position:absolute;left:340px;top:483px;width:35px;height:20px;box-shadow: inset -1px -1px #404040, inset 1px 1px #fff, inset -2px -2px #808080, inset 2px 2px #d4d0c8;background:#d4d0c8;"><div style="position:absolute;left:1px;top:1px;width:35px;height:20px;text-align:center;font:12px/20px 'Liberation Sans',sans-serif;color:#000;transform:scaleX(0.87);">0.1s</div></div>
<div style="position:absolute;left:380px;top:483px;width:35px;height:20px;box-shadow: inset -1px -1px #404040, inset 1px 1px #fff, inset -2px -2px #808080, inset 2px 2px #d4d0c8;background:#d4d0c8;"><div style="position:absolute;left:1px;top:1px;width:35px;height:20px;text-align:center;font:12px/20px 'Liberation Sans',sans-serif;color:#000;transform:scaleX(0.87);">50ms</div></div>
<div style="position:absolute;left:420px;top:483px;width:35px;height:20px;box-shadow: inset -1px -1px #404040, inset 1px 1px #fff, inset -2px -2px #808080, inset 2px 2px #d4d0c8;background:#d4d0c8;"><div style="position:absolute;left:1px;top:1px;width:35px;height:20px;text-align:center;font:12px/20px 'Liberation Sans',sans-serif;color:#000;transform:scaleX(0.87);">20ms</div></div>
<div style="position:absolute;left:468px;top:386px;width:129px;height:41px;box-shadow: inset -1px -1px #fff, inset 1px 1px #404040, inset -2px -2px #d4d0c8, inset 2px 2px #808080;background-color:#d4d0c8;background-image:repeating-conic-gradient(#fff 0% 25%, #d4d0c8 0% 50%);background-size:2px 2px;"><div style="position:absolute;left:2px;top:2px;width:129px;height:41px;text-align:center;font:bold 13px/41px 'Liberation Sans',sans-serif;color:#0000c0;">Run</div></div>
<div style="position:absolute;left:468px;top:436px;width:129px;height:24px;box-shadow: inset -1px -1px #fff, inset 1px 1px #808080;background:#ff0000;"><div style="position:absolute;left:24px;top:0;height:24px;white-space:nowrap;font:bold 14.3px/24px 'Liberation Sans',sans-serif;color:#3a0000;">Recording</div></div>
<div style="position:absolute;left:468px;top:470px;width:129px;height:41px;box-shadow: inset -1px -1px #404040, inset 1px 1px #fff, inset -2px -2px #808080, inset 2px 2px #d4d0c8;background:#d4d0c8;"><div style="position:absolute;left:1px;top:1px;width:129px;height:41px;text-align:center;font:bold 13px/41px 'Liberation Sans',sans-serif;color:#fff;">Single</div><div style="position:absolute;left:0px;top:0px;width:129px;height:41px;text-align:center;font:bold 13px/41px 'Liberation Sans',sans-serif;color:#707070;">Single</div></div>
</body></html>
